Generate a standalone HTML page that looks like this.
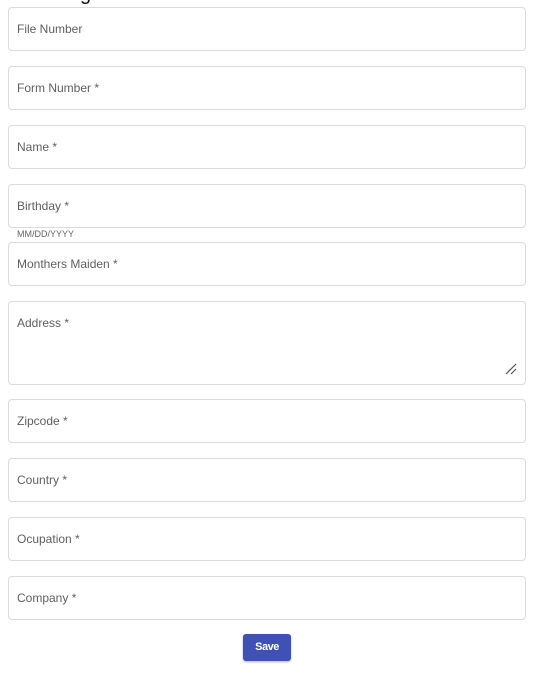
<!DOCTYPE html>
<html><head><style>
body{margin:0;width:537px;height:675px;background:#fff;font-family:"Liberation Sans",Arial,sans-serif;position:relative;overflow:hidden}
.f{position:absolute;left:8px;width:516px;height:42px;border:1px solid #dcdcdc;border-radius:4px;box-sizing:content-box}
.f span{position:absolute;left:8px;top:14px;font-size:12px;color:#5f5f5f}
.h{position:absolute;left:17px;top:229px;font-size:9px;color:#666}
.btn{position:absolute;left:243px;top:634px;width:48px;height:27px;background:#3f51b5;border-radius:3px;color:#fff;font-size:11px;font-weight:bold;text-align:center;line-height:27px;box-shadow:0 1px 2px rgba(0,0,0,.3);letter-spacing:-0.5px}
.t{position:absolute;left:80px;top:-17px;font-size:20px;color:#111}
</style></head><body>
<div class="t">g</div>
<div class="f" style="top:7px"><span>File Number</span></div>
<div class="f" style="top:66px"><span>Form Number *</span></div>
<div class="f" style="top:125px"><span>Name *</span></div>
<div class="f" style="top:184px"><span>Birthday *</span></div>
<div class="h">MM/DD/YYYY</div>
<div class="f" style="top:242px"><span>Monthers Maiden *</span></div>
<div class="f" style="top:301px;height:82px"><span>Address *</span>
<svg style="position:absolute;right:8px;bottom:9px" width="12" height="12" viewBox="0 0 12 12"><path d="M1 11L11 1M6 11L11 6" stroke="#555" stroke-width="1.2"/></svg></div>
<div class="f" style="top:399px"><span>Zipcode *</span></div>
<div class="f" style="top:458px"><span>Country *</span></div>
<div class="f" style="top:517px"><span>Ocupation *</span></div>
<div class="f" style="top:576px"><span>Company *</span></div>
<div class="btn">Save</div>
</body></html>
